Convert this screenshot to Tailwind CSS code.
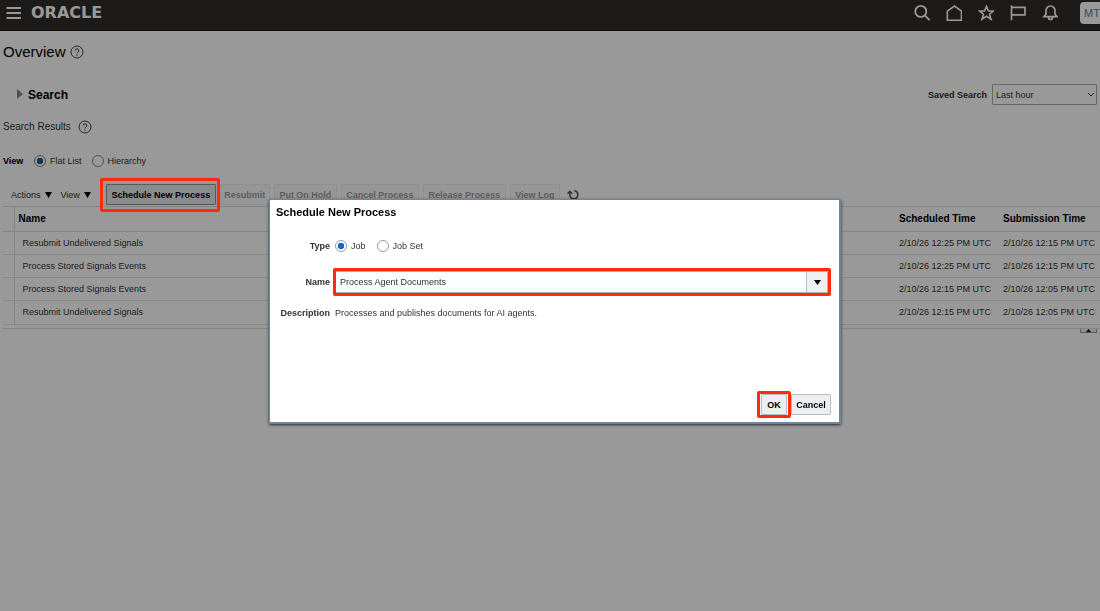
<!DOCTYPE html>
<html lang="en">
<head>
    <meta charset="UTF-8">
    <meta name="viewport" content="width=device-width, initial-scale=1.0">
    <title>Overview - Scheduled Processes</title>
    <script src="https://cdn.jsdelivr.net/npm/@tailwindcss/browser@4"></script>
</head>
<body class="min-h-screen overflow-hidden bg-white font-['Liberation_Sans',Arial,sans-serif] text-[9px] leading-3 text-[#333]">
    <header class="flex h-[31px] items-center overflow-hidden border-b border-[#1a1816] bg-[#312d2a] pb-1 pl-[6px] text-white">
        <button type="button" aria-label="Navigator" class="shrink-0">
            <svg class="h-4 w-4" viewBox="0 0 16 16" fill="none" stroke="currentColor" stroke-width="2"><path d="M.5 3h14.500M.5 8h14.500M.5 13h14.500"/></svg>
        </button>
        <a href="#" class="ml-[9px] font-['DejaVu_Sans',sans-serif] text-[16px] leading-4 font-bold">ORACLE</a>
        <nav class="ml-auto flex shrink-0 items-center gap-4">
            <a href="#" aria-label="Search"><svg class="h-4 w-4" viewBox="0 0 16 16" fill="none" stroke="currentColor" stroke-width="1.800"><circle cx="6.800" cy="6.400" r="5.500"/><path d="M10.800 10.400l4.700 4.700"/></svg></a>
            <a href="#" aria-label="Home"><svg class="h-4 w-4" viewBox="0 0 16 16" fill="none" stroke="currentColor" stroke-width="1.600"><path d="M1.300 15.200V6.200L8.500 1l7 5.200v9z"/></svg></a>
            <a href="#" aria-label="Favorites"><svg class="h-4 w-4" viewBox="0 0 16 16" fill="none" stroke="currentColor" stroke-width="1.600"><path d="M8.500 1.300l1.900 4.700h5l-3.900 3.200 1.500 5-4.500-2.900-4.500 2.900 1.500-5L1.600 6h5z"/></svg></a>
            <a href="#" aria-label="Watchlist"><svg class="h-4 w-4" viewBox="0 0 16 16" fill="none" stroke="currentColor" stroke-width="1.700"><path d="M1.500.3v15M1.500 2.300h13.500v7.500H1.500"/></svg></a>
            <a href="#" aria-label="Notifications"><svg class="h-4 w-4" viewBox="0 0 16 16" fill="none" stroke="currentColor" stroke-width="1.700"><path d="M2 11.700h13L13 9.200V5.500a4.500 4.500 0 0 0-9 0v3.700zM6.500 12.500a2 2 0 0 0 4 0"/></svg></a>
        </nav>
        <div class="ml-[22px] w-5 shrink-0 overflow-hidden">
            <button type="button" class="h-[22px] w-6 rounded bg-white text-[11px] text-[#777]">MT</button>
        </div>
    </header>

    <main>
        <div class="flex items-center gap-1 pt-[13px] pl-[3px]">
            <h1 class="text-[15px] leading-4 text-black">Overview</h1>
            <svg class="h-[14px] w-[14px] text-[#444]" viewBox="0 0 14 14" fill="none" stroke="currentColor"><circle cx="7" cy="7" r="6"/><path d="M5.200 5.600a1.800 1.800 0 1 1 2.700 1.500q-.9.500-.9 1.300M7 9.500v1.200"/></svg>
        </div>

        <div class="mt-6 flex h-[21px] items-center pr-[3px] pl-4">
            <button type="button" class="flex items-center gap-1 text-[12px] leading-4 font-bold text-black">
                <svg class="h-3 w-2" viewBox="0 0 8 12"><path d="M1 0l6 5-6 5z" fill="#888"/></svg>
                Search
            </button>
            <label for="saved" class="ml-auto font-bold">Saved Search</label>
            <div class="relative ml-[5px]">
                <select id="saved" class="h-[21px] w-[105px] appearance-none rounded-[1px] border border-[#aaa] bg-white px-[3px]">
                    <option>Last hour</option>
                </select>
                <svg class="pointer-events-none absolute top-[7px] right-[2px] h-2 w-2" viewBox="0 0 8 8" fill="none" stroke="#444"><path d="M1 2l3 3 3-3"/></svg>
            </div>
        </div>

        <div class="mt-[14px] flex items-center gap-[7px] pl-[3px]">
            <h2 class="text-[10px] leading-4">Search Results</h2>
            <svg class="h-[14px] w-[14px] text-[#444]" viewBox="0 0 14 14" fill="none" stroke="currentColor"><circle cx="7" cy="7" r="6"/><path d="M5.200 5.600a1.800 1.800 0 1 1 2.700 1.500q-.9.500-.9 1.300M7 9.500v1.200"/></svg>
        </div>

        <fieldset class="mt-5 flex h-3 items-center pl-[3px]">
            <legend class="float-left w-[31px] font-bold text-black">View</legend>
            <label class="flex items-center gap-1">
                <input type="radio" name="view" checked class="h-3 w-3 appearance-none rounded-full border border-[#888] bg-white bg-[radial-gradient(circle,#1f5b93_3px,transparent_3px)]">
                Flat List
            </label>
            <label class="ml-[10px] flex items-center gap-1">
                <input type="radio" name="view" class="h-3 w-3 appearance-none rounded-full border border-[#888] bg-white">
                Hierarchy
            </label>
        </fieldset>

        <div class="mt-[17px] flex h-[21px] items-center pl-[11px]">
            <button type="button" class="flex items-center gap-1">Actions
                <svg class="h-[6px] w-[7px]" viewBox="0 0 7 6"><path d="M0 0h7L3.500 6z"/></svg>
            </button>
            <button type="button" class="ml-[9px] flex items-center gap-1">View
                <svg class="h-[6px] w-[7px]" viewBox="0 0 7 6"><path d="M0 0h7L3.500 6z"/></svg>
            </button>
            <div class="relative ml-[15px]">
                <button type="button" class="h-[21px] w-[110px] rounded-[1px] border border-[#8f979e] bg-[#e6e8ea] font-bold text-black">Schedule New Process</button>
                <!-- highlight sits above the dimmed page -->
                <span class="pointer-events-none absolute -top-[6px] -right-1 -bottom-[7px] -left-[6px] z-20 rounded-[2px] border-[3px] border-[#ff2b0a]"></span>
            </div>
            <div class="ml-1 flex gap-1 font-bold text-[#9c9c9c]">
                <button type="button" disabled class="h-[21px] w-[50px] border border-[#eee] bg-[#fbfbfb]">Resubmit</button>
                <button type="button" disabled class="h-[21px] w-[63px] border border-[#eee] bg-[#fbfbfb]">Put On Hold</button>
                <button type="button" disabled class="h-[21px] w-[78px] border border-[#eee] bg-[#fbfbfb]">Cancel Process</button>
                <button type="button" disabled class="h-[21px] w-[83px] border border-[#eee] bg-[#fbfbfb]">Release Process</button>
                <button type="button" disabled class="h-[21px] w-[50px] border border-[#eee] bg-[#fbfbfb]">View Log</button>
            </div>
            <button type="button" aria-label="Refresh" class="ml-[7px]">
                <svg class="h-3 w-3" viewBox="0 0 12 12" fill="none" stroke="#555" stroke-width="1.500"><path d="M7.500 1.700a4 4 0 1 1-4.700 4V3M.5 4.800L2.800 2.300l2.400 2.500"/></svg>
            </button>
        </div>

        <div class="mt-px ml-[3px] border-y border-[#d9dcdf] pb-[3px]">
            <table class="w-full table-fixed border-collapse text-left">
                <colgroup><col class="w-[11px]"><col><col class="w-[104px]"><col class="w-[101px]"></colgroup>
                <thead class="text-[10px] text-black">
                    <tr class="h-6 border-b border-[#d9dcdf]"><td class="border-r border-[#d9dcdf]"></td><th class="px-1">Name</th><th class="px-1">Scheduled Time</th><th class="px-1">Submission Time</th></tr>
                </thead>
                <tbody>
                    <tr class="h-[23px] border-b border-[#e3e5e7]"><td class="border-r border-[#d9dcdf]"></td><td class="px-2">Resubmit Undelivered Signals</td><td class="px-1">2/10/26 12:25 PM UTC</td><td class="px-1">2/10/26 12:15 PM UTC</td></tr>
                    <tr class="h-[23px] border-b border-[#e3e5e7]"><td class="border-r border-[#d9dcdf]"></td><td class="px-2">Process Stored Signals Events</td><td class="px-1">2/10/26 12:25 PM UTC</td><td class="px-1">2/10/26 12:15 PM UTC</td></tr>
                    <tr class="h-[23px] border-b border-[#e3e5e7]"><td class="border-r border-[#d9dcdf]"></td><td class="px-2">Process Stored Signals Events</td><td class="px-1">2/10/26 12:15 PM UTC</td><td class="px-1">2/10/26 12:05 PM UTC</td></tr>
                    <tr class="h-6 border-b border-[#e3e5e7]"><td class="border-r border-[#d9dcdf]"></td><td class="px-2">Resubmit Undelivered Signals</td><td class="px-1">2/10/26 12:15 PM UTC</td><td class="px-1">2/10/26 12:05 PM UTC</td></tr>
                </tbody>
            </table>
        </div>
        <button type="button" aria-label="Collapse" class="mr-[3px] ml-auto flex h-1 w-[17px] justify-center border border-t-0 border-[#999] bg-[#eee]">
            <svg class="h-[3px] w-[5px]" viewBox="0 0 5 3"><path d="M0 3h5L2.500 0z"/></svg>
        </button>
    </main>

    <div class="fixed inset-0 z-10 bg-black/40"></div>

    <form role="dialog" aria-labelledby="dialog-title" class="absolute top-[199px] left-[269px] z-30 w-[572px] border border-r-2 border-b-2 border-[#71859a] bg-white px-[6px] pt-[6px] pb-[7px] shadow-sm shadow-black/60">
        <h2 id="dialog-title" class="text-[11px] leading-3 font-bold text-black">Schedule New Process</h2>
        <div class="mt-4 mr-[5px] grid grid-cols-[54px_1fr] items-center gap-x-[5px]">
            <span class="h-6 text-right leading-6 font-bold">Type</span>
            <div class="flex h-6 items-center">
                <label class="flex items-center gap-1">
                    <input type="radio" name="type" checked class="h-3 w-3 appearance-none rounded-full border border-[#8a9bab] bg-white bg-[radial-gradient(circle,#1668cc_3px,transparent_3px)]">
                    Job
                </label>
                <label class="ml-[11px] flex items-center gap-1">
                    <input type="radio" name="type" class="h-3 w-3 appearance-none rounded-full border border-[#8a9bab] bg-white">
                    Job Set
                </label>
            </div>
            <label for="process" class="mt-3 text-right font-bold">Name</label>
            <div class="relative mt-[13px]">
                <select id="process" class="block h-[22px] w-full appearance-none border border-[#a3b1bf] bg-[#fbfdfe] px-1">
                    <option>Process Agent Documents</option>
                </select>
                <span class="pointer-events-none absolute top-px right-px flex h-5 w-[21px] items-center justify-center border-l border-[#b4bfca] bg-[#eef0f2]">
                    <svg class="h-[5px] w-[7px]" viewBox="0 0 7 5"><path d="M0 0h7L3.500 5z"/></svg>
                </span>
                <span class="pointer-events-none absolute -inset-y-[3px] -right-[3px] -left-[2px] rounded-[2px] border-[3px] border-[#ff2b0a]"></span>
            </div>
            <span class="mt-[14px] text-right font-bold">Description</span>
            <span class="mt-[14px]">Processes and publishes documents for AI agents.</span>
        </div>
        <div class="mt-[75px] mr-[2px] flex justify-end gap-1 font-bold text-black">
            <div class="relative">
                <button type="button" class="h-[21px] w-[26px] rounded-[1px] border border-[#b4bcc4] bg-[#eceef0]">OK</button>
                <span class="pointer-events-none absolute -inset-x-1 -inset-y-[3px] rounded-[2px] border-[3px] border-[#ff2b0a]"></span>
            </div>
            <button type="button" class="h-[21px] w-10 rounded-[1px] border border-[#b4bcc4] bg-[#eceef0]">Cancel</button>
        </div>
    </form>
</body>
</html>
